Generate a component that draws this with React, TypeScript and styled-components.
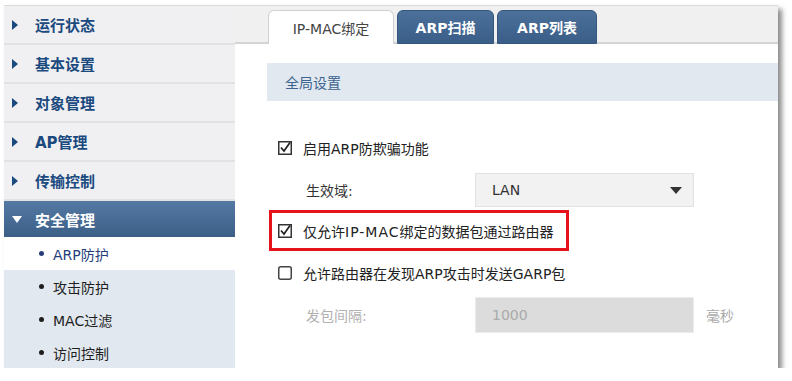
import React from "react";
import styled, { createGlobalStyle, css } from "styled-components";

const GlobalStyle = createGlobalStyle`
  body {
    margin: 0;
    background: #ffffff;
    font-family: "DejaVu Sans", "Noto Sans CJK SC", sans-serif;
  }
`;

const Window = styled.div`
  display: flex;
  width: 774px;
  height: 362px;
  margin: 5px 0 0 4px;
  border-top: 1px solid #dadada;
  box-shadow: 4px 4px 5px rgba(0, 0, 0, 0.45);
  background: #fff;
  overflow: hidden;
`;

const Sidebar = styled.nav`
  width: 231px;
  flex-shrink: 0;
  display: flex;
  flex-direction: column;
  background: #e1e8ef;
`;

const MenuItem = styled.div<{ $open?: boolean }>`
  height: 37px;
  flex-shrink: 0;
  display: flex;
  align-items: center;
  padding-left: 8px;
  gap: 12px;
  font-size: 15px;
  font-weight: bold;
  color: #1b4a7f;
  background: #f0f0f2;
  border-bottom: 2px solid #e2e2e5;
  ${(p) =>
    p.$open &&
    css`
      height: 36px;
      border-bottom: none;
      color: #ffffff;
      background: linear-gradient(#5479a2, #3c5f88);
    `}
`;

const ArrowBox = styled.span`
  width: 11px;
  display: flex;
  align-items: center;
`;

const SubItem = styled.div<{ $active?: boolean }>`
  height: 33px;
  flex-shrink: 0;
  display: flex;
  align-items: center;
  padding-left: 35px;
  gap: 9px;
  font-size: 14px;
  color: ${(p) => (p.$active ? "#263d7c" : "#1e1e1e")};
  background: ${(p) => (p.$active ? "#ffffff" : "transparent")};

  &::before {
    content: "";
    width: 5px;
    height: 5px;
    border-radius: 50%;
    background: ${(p) => (p.$active ? "#263d7c" : "#1e1e1e")};
  }
`;

const Main = styled.main`
  flex: 1;
  display: flex;
  flex-direction: column;
  background: #fff;
`;

const TabBar = styled.div`
  height: 36px;
  display: flex;
  align-items: flex-end;
  gap: 3px;
  padding-left: 33px;
  background: #f0f0f0;
  border-bottom: 2px solid #d4d4d4;
`;

const Tab = styled.div<{ $active?: boolean; $w: number }>`
  width: ${(p) => p.$w}px;
  height: 34px;
  margin-bottom: -2px;
  box-sizing: border-box;
  display: flex;
  align-items: center;
  justify-content: center;
  font-size: 14px;
  border-radius: 6px 6px 0 0;
  ${(p) =>
    p.$active
      ? css`
          background: #ffffff;
          color: #444;
          border: 1px solid #d0d0d0;
          border-bottom: none;
        `
      : css`
          background: linear-gradient(#4b709a, #3a5e88);
          color: #ffffff;
          font-weight: bold;
          border: 1px solid #34577f;
        `}
`;

const SectionHeader = styled.div`
  margin: 19px 0 0 32px;
  height: 38px;
  display: flex;
  align-items: center;
  padding-left: 18px;
  background: #e1e8ef;
  color: #3b6390;
  font-size: 14px;
`;

const Form = styled.div`
  display: flex;
  flex-direction: column;
  padding: 26px 0 0 32px;
`;

const CheckRow = styled.div<{ $highlight?: boolean }>`
  height: 42px;
  display: flex;
  align-items: center;
  gap: 11px;
  padding-left: 11px;
  font-size: 14px;
  color: #222;
  box-sizing: border-box;
  ${(p) =>
    p.$highlight &&
    css`
      width: 300px;
      height: 41px;
      margin: -1px 0 1px 2px;
      padding-left: 6px;
      border: 3px solid #e6121c;
    `}
`;

const Wide = styled.span`
  letter-spacing: 1px;
`;

const FieldRow = styled.div`
  height: 42px;
  display: flex;
  align-items: center;
  padding-left: 39px;
  font-size: 14px;
`;

const FieldLabel = styled.span<{ $disabled?: boolean }>`
  width: 169px;
  color: ${(p) => (p.$disabled ? "#b0b0b0" : "#333")};
`;

const Select = styled.div`
  width: 219px;
  height: 34px;
  box-sizing: border-box;
  display: flex;
  align-items: center;
  justify-content: space-between;
  padding: 0 11px 0 16px;
  background: #f2f2f2;
  border: 1px solid #e2e2e2;
  color: #333;
`;

const Input = styled.div`
  width: 219px;
  height: 36px;
  box-sizing: border-box;
  display: flex;
  align-items: center;
  padding-left: 16px;
  background: #dcdcdc;
  border: 1px solid #ececec;
  color: #aaaaaa;
`;

const Unit = styled.span`
  margin-left: 12px;
  color: #aaaaaa;
`;

const RightArrow = () => (
  <svg width="7" height="10" viewBox="0 0 7 10">
    <path d="M0 0 L6 5 L0 10 Z" fill="#1b4a7f" />
  </svg>
);

const DownArrow = ({ color, w = 12 }: { color: string; w?: number }) => (
  <svg width={w} height="7" viewBox="0 0 12 7" preserveAspectRatio="none">
    <path d="M0 0 L12 0 L6 7 Z" fill={color} />
  </svg>
);

const CheckBox = ({ checked }: { checked?: boolean }) => (
  <svg width="14" height="14" viewBox="0 0 14 14">
    {checked ? (
      <>
        <rect x="0.75" y="0.75" width="12.5" height="12.5" fill="#fff" stroke="#333" strokeWidth="1.5" />
        <path d="M3 6.5 L6 10 L12 1.5" fill="none" stroke="#222" strokeWidth="1.7" />
      </>
    ) : (
      <rect x="0.75" y="0.75" width="12.5" height="12.5" rx="2" fill="#fff" stroke="#444" strokeWidth="1.5" />
    )}
  </svg>
);

const menu = ["运行状态", "基本设置", "对象管理", "AP管理", "传输控制"];
const subMenu = ["ARP防护", "攻击防护", "MAC过滤", "访问控制"];

export default function App() {
  return (
    <>
      <GlobalStyle />
      <Window>
        <Sidebar>
          {menu.map((m) => (
            <MenuItem key={m}>
              <ArrowBox>
                <RightArrow />
              </ArrowBox>
              {m}
            </MenuItem>
          ))}
          <MenuItem $open>
            <ArrowBox>
              <DownArrow color="#ffffff" w={10} />
            </ArrowBox>
            安全管理
          </MenuItem>
          {subMenu.map((s, i) => (
            <SubItem key={s} $active={i === 0}>
              {s}
            </SubItem>
          ))}
        </Sidebar>
        <Main>
          <TabBar>
            <Tab $active $w={126}>IP-MAC绑定</Tab>
            <Tab $w={97}>ARP扫描</Tab>
            <Tab $w={100}>ARP列表</Tab>
          </TabBar>
          <SectionHeader>全局设置</SectionHeader>
          <Form>
            <CheckRow>
              <CheckBox checked />
              启用ARP防欺骗功能
            </CheckRow>
            <FieldRow>
              <FieldLabel>生效域:</FieldLabel>
              <Select>
                LAN
                <DownArrow color="#333" />
              </Select>
            </FieldRow>
            <CheckRow $highlight>
              <CheckBox checked />
              <span>
                仅允许<Wide>IP-MAC</Wide>绑定的数据包通过路由器
              </span>
            </CheckRow>
            <CheckRow>
              <CheckBox />
              允许路由器在发现ARP攻击时发送GARP包
            </CheckRow>
            <FieldRow>
              <FieldLabel $disabled>发包间隔:</FieldLabel>
              <Input>1000</Input>
              <Unit>毫秒</Unit>
            </FieldRow>
          </Form>
        </Main>
      </Window>
    </>
  );
}
